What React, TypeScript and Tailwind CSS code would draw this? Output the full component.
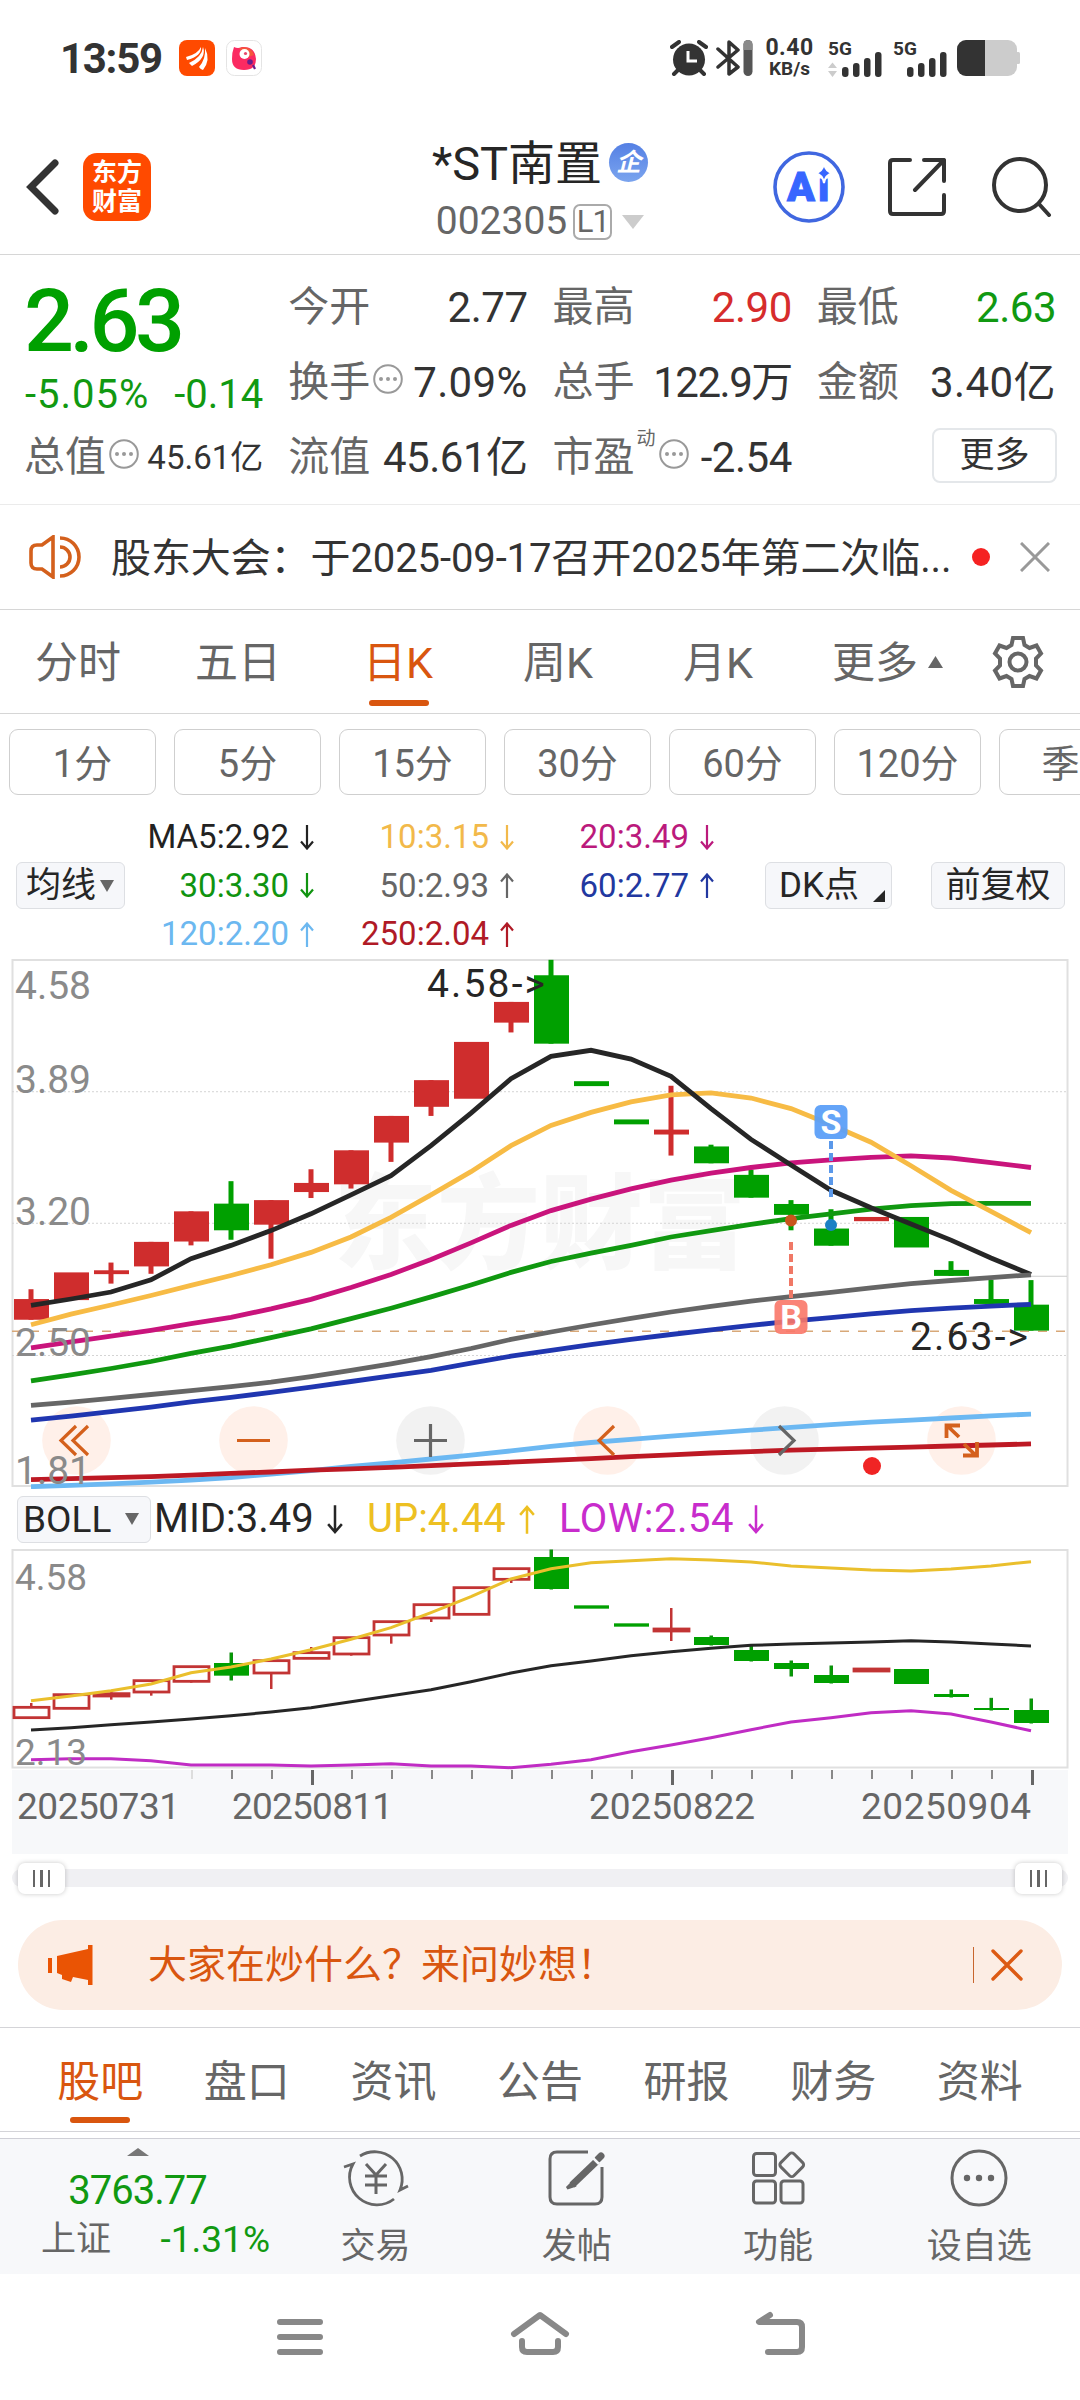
import type { ReactNode } from 'react';

type Trend = 'up' | 'down';

interface Candle {
  body: [number, number];
  wick?: [number, number];
  down?: boolean;
}

// ── Quote data ──────────────────────────────────────────────
const TABS = ['分时', '五日', '日K', '周K', '月K'];
const PERIODS = ['1分', '5分', '15分', '30分', '60分', '120分', '季K'];
const INFO_TABS = ['股吧', '盘口', '资讯', '公告', '研报', '财务', '资料'];

const AVERAGES: { label: string; color: string; trend: Trend }[] = [
  { label: 'MA5:2.92', color: 'text-[#222222]', trend: 'down' },
  { label: '10:3.15', color: 'text-[#f2b94a]', trend: 'down' },
  { label: '20:3.49', color: 'text-[#bb1a7c]', trend: 'down' },
  { label: '30:3.30', color: 'text-[#109410]', trend: 'down' },
  { label: '50:2.93', color: 'text-[#666666]', trend: 'up' },
  { label: '60:2.77', color: 'text-[#2238a0]', trend: 'up' },
  { label: '120:2.20', color: 'text-[#6cb8f0]', trend: 'up' },
  { label: '250:2.04', color: 'text-[#b01a26]', trend: 'up' },
];

// ── Chart data, in plot units from the top of each panel ────
const MAIN_SCALE = 0.3508;
const BOLL_SCALE = 1 / 3;
const x = (i: number) => 31 + i * 40;

const MAIN_CANDLES: Candle[] = [
  { body: [995, 1054], wick: [967, 1054] },
  { body: [919, 998] },
  { body: [913, 924], wick: [891, 951] },
  { body: [832, 902], wick: [832, 923] },
  { body: [745, 831], wick: [745, 842] },
  { body: [723, 799], wick: [659, 826], down: true },
  { body: [713, 783], wick: [713, 880] },
  { body: [664, 690], wick: [625, 707] },
  { body: [571, 668], wick: [571, 680] },
  { body: [473, 549], wick: [473, 604] },
  { body: [371, 447], wick: [371, 473] },
  { body: [262, 424] },
  { body: [148, 207], wick: [148, 235] },
  { body: [72, 267], wick: [28, 267], down: true },
  { body: [374, 388], down: true },
  { body: [483, 497], down: true },
  { body: [512, 526], wick: [387, 586] },
  { body: [560, 608], wick: [555, 608], down: true },
  { body: [641, 706], wick: [626, 706], down: true },
  { body: [724, 755], wick: [713, 799], down: true },
  { body: [794, 843], wick: [739, 843], down: true },
  { body: [761, 773] },
  { body: [761, 848], down: true },
  { body: [912, 929], wick: [887, 929], down: true },
  { body: [995, 1009], wick: [940, 1009], down: true },
  { body: [1011, 1085], wick: [941, 1085], down: true },
];

const MAIN_LINES: { color: string; values: number[] }[] = [
  { color: '#6cb8f2', values: [1530, 1526, 1522, 1517, 1511, 1504, 1494, 1484, 1472, 1462, 1451, 1440, 1428, 1415, 1404, 1395, 1386, 1377, 1369, 1361, 1353, 1346, 1340, 1334, 1328, 1323] },
  { color: '#bd1924', values: [1510, 1507, 1504, 1501, 1497, 1492, 1488, 1483, 1479, 1475, 1470, 1465, 1460, 1455, 1450, 1444, 1439, 1434, 1430, 1426, 1423, 1420, 1417, 1414, 1411, 1408] },
  { color: '#2036b0', values: [1340, 1329, 1316, 1303, 1288, 1275, 1261, 1246, 1230, 1214, 1198, 1178, 1158, 1141, 1125, 1110, 1096, 1083, 1070, 1058, 1048, 1037, 1028, 1021, 1015, 1010] },
  { color: '#109810', values: [1228, 1211, 1193, 1173, 1150, 1129, 1105, 1080, 1051, 1021, 989, 955, 919, 888, 864, 842, 818, 800, 782, 766, 752, 739, 729, 723, 722, 722] },
  { color: '#c9147c', values: [1134, 1117, 1101, 1084, 1065, 1047, 1023, 996, 962, 925, 882, 835, 785, 743, 710, 681, 656, 636, 620, 607, 598, 591, 587, 593, 606, 620] },
  { color: '#f7bb45', values: [1068, 1038, 1012, 985, 956, 928, 897, 862, 818, 762, 698, 632, 558, 500, 463, 433, 413, 407, 422, 452, 498, 548, 615, 685, 745, 806] },
  { color: '#262626', values: [1013, 995, 975, 940, 880, 842, 800, 752, 698, 643, 558, 465, 367, 303, 286, 311, 360, 452, 540, 613, 685, 735, 781, 827, 878, 925] },
  { color: '#666666', values: [1298, 1289, 1278, 1267, 1256, 1245, 1232, 1216, 1198, 1180, 1159, 1136, 1110, 1089, 1069, 1050, 1032, 1016, 1001, 988, 976, 963, 951, 942, 934, 926] },
];

const BOLL_CANDLES: Candle[] = [
  { body: [652, 683], wick: [639, 652] },
  { body: [614, 655] },
  { body: [611, 618], wick: [603, 629] },
  { body: [572, 606], wick: [606, 617] },
  { body: [530, 574], wick: [574, 578] },
  { body: [519, 557], wick: [489, 570], down: true },
  { body: [512, 549], wick: [549, 597] },
  { body: [488, 505], wick: [471, 488] },
  { body: [443, 492], wick: [492, 497] },
  { body: [395, 435], wick: [435, 461] },
  { body: [344, 384], wick: [384, 396] },
  { body: [293, 373] },
  { body: [236, 268], wick: [268, 279] },
  { body: [201, 297], wick: [180, 297], down: true },
  { body: [346, 356], down: true },
  { body: [400, 410], down: true },
  { body: [417, 423], wick: [354, 453] },
  { body: [441, 465], wick: [438, 465], down: true },
  { body: [480, 513], wick: [469, 513], down: true },
  { body: [519, 537], wick: [513, 558], down: true },
  { body: [555, 579], wick: [528, 579], down: true },
  { body: [537, 543] },
  { body: [537, 582], down: true },
  { body: [612, 621], wick: [600, 621], down: true },
  { body: [654, 660], wick: [625, 660], down: true },
  { body: [660, 699], wick: [627, 699], down: true },
];

const BOLL_LINES: { color: string; values: number[] }[] = [
  { color: '#c02cc4', values: [809, 806, 806, 812, 825, 825, 825, 828, 825, 821, 828, 828, 833, 823, 809, 785, 765, 743, 719, 696, 683, 668, 662, 672, 696, 722] },
  { color: '#262626', values: [720, 713, 704, 696, 687, 677, 666, 653, 635, 617, 599, 575, 549, 527, 513, 497, 485, 475, 466, 462, 459, 456, 452, 456, 462, 468] },
  { color: '#eabf2c', values: [632, 618, 602, 582, 548, 531, 507, 479, 448, 413, 368, 320, 267, 236, 218, 212, 206, 210, 216, 228, 234, 240, 243, 237, 228, 215] },
];

const toPoints = (values: number[], scale: number) =>
  values.map((v, i) => `${x(i)},${(v * scale).toFixed(1)}`).join(' ');

// ── Small pieces ────────────────────────────────────────────
function Arrow({ trend, className }: { trend: Trend; className: string }) {
  return (
    <svg viewBox="0 0 14 25" className={className} fill="none" stroke="currentColor" strokeWidth="2.2">
      {trend === 'down' ? <path d="M7 0V23M1 16.5l6 7 6-7" /> : <path d="M7 25V2M1 8.5l6-7 6 7" />}
    </svg>
  );
}

function InfoDots() {
  return (
    <svg viewBox="0 0 30 30" className="mb-[8px] ml-[3px] size-[30px] shrink-0" fill="#999">
      <circle cx="15" cy="15" r="13.8" fill="none" stroke="#999" strokeWidth="2" />
      <circle cx="8" cy="15" r="2" />
      <circle cx="15" cy="15" r="2" />
      <circle cx="22" cy="15" r="2" />
    </svg>
  );
}

function Stat({ label, value, color = 'text-[#333333]', extra }: { label: string; value: string; color?: string; extra?: ReactNode }) {
  return (
    <div className="flex h-[75px] items-center justify-between whitespace-nowrap">
      <span className="-ml-[2px] flex items-center text-[41px] text-[#666666]">
        {label}
        {extra}
      </span>
      <span className={`text-[42px] tracking-[-0.5px] ${color}`}>{value}</span>
    </div>
  );
}

// ── Status bar ──────────────────────────────────────────────
function Signal({ arrows }: { arrows?: boolean }) {
  return (
    <div className="flex h-[36px] w-[54px] flex-col">
      <span className="text-[19px] leading-[17px] font-bold">5G</span>
      <svg viewBox="0 0 54 26" className="-mt-[6px] h-[26px] w-[54px] shrink-0" fill="#333">
        {arrows && <path d="M0 17l4.5-5.500 4.500 5.500zM0 20l4.500 6 4.500-6z" fill="#ccc" />}
        <rect x="14" y="16" width="6.500" height="10" rx="3" />
        <rect x="25" y="12" width="6.500" height="14" rx="3" />
        <rect x="36" y="7" width="6.500" height="19" rx="3" />
        <rect x="47" y="1" width="6.500" height="25" rx="3" />
      </svg>
    </div>
  );
}

function StatusBar() {
  return (
    <div className="flex h-[116px] items-center pr-[59px] pl-[60px] text-[#333333]">
      <span className="w-[119px] text-[42px] font-bold tracking-[-1.3px]">13:59</span>
      <svg viewBox="0 0 36 36" className="size-[36px]">
        <rect width="36" height="36" rx="8" fill="#ff4a00" />
        <path d="M7 17Q19 14 22 7q1 9-14 13zM10 23Q23 17 24 7q4 11-11 19zM20 27Q27 19 26 8q6 12-2 22-2 0-4-3z" fill="#fff" />
      </svg>
      <svg viewBox="0 0 36 36" className="ml-[11px] size-[36px]">
        <rect x=".5" y=".5" width="35" height="35" rx="8" fill="#fff" stroke="#e4e4e4" />
        <path d="M8 7q4 2 8 0 13-1 14 12 0 11-12 11Q6 30 6 19 6 12 8 7z" fill="#fb2a62" />
        <path d="M13 8q12-3 15 7l-8 3z" fill="#f4573c" />
        <circle cx="18.500" cy="14" r="5" fill="#fff" />
        <circle cx="19.500" cy="13.500" r="1.600" fill="#e8486a" />
        <circle cx="24" cy="22" r="2.800" fill="#6a1d8c" />
        <path d="M27 25l2 4" stroke="#6a1d8c" strokeWidth="2.200" />
      </svg>
      <div className="ml-auto flex items-center">
        <svg viewBox="0 0 38 36" className="h-[36px] w-[38px]">
          <circle cx="19" cy="19.500" r="16" fill="#333" />
          <path d="M2 7l7-5M36 7l-7-5M4 34l6-6M34 34l-6-6" stroke="#333" strokeWidth="4" strokeLinecap="round" />
          <path d="M18 11v10h9" fill="none" stroke="#fff" strokeWidth="3" />
        </svg>
        <svg viewBox="0 0 37 36" className="ml-[8px] h-[36px] w-[37px]" fill="none" stroke="#333" strokeWidth="3.500">
          <path d="M2 9l20 18-9 7V2l9 8L2 27" strokeLinejoin="round" strokeLinecap="round" />
          <rect x="27.500" width="9" height="36" rx="4.500" fill="#555" stroke="none" />
          <path d="M27.500 10V4.500a4.500 4.500 0 019 0V10z" fill="#8a8a8a" stroke="none" />
        </svg>
        <div className="ml-[13px] flex w-[47px] flex-col items-center font-bold">
          <span className="text-[23px] leading-[22px] tracking-[0.5px]">0.40</span>
          <span className="text-[19px] leading-[20px]">KB/s</span>
        </div>
        <div className="ml-[15px]">
          <Signal arrows />
        </div>
        <div className="ml-[11px]">
          <Signal />
        </div>
        <svg viewBox="0 0 64 36" className="ml-[10px] h-[36px] w-[64px]">
          <rect width="60" height="36" rx="9" fill="#ccc" />
          <rect x="59" y="12" width="4" height="12" rx="1.500" fill="#ccc" />
          <path d="M9 0h19v36H9a9 9 0 01-9-9V9a9 9 0 019-9z" fill="#333" />
        </svg>
      </div>
    </div>
  );
}

// ── Title bar ───────────────────────────────────────────────
function Header() {
  return (
    <div className="grid h-[139px] grid-cols-[1fr_auto_1fr] items-center border-b border-[#d6d6d6] pt-[4px]">
      <div className="flex items-center pl-[26px]">
        <svg viewBox="0 0 34 58" className="h-[58px] w-[34px]" fill="none" stroke="#333" strokeWidth="7" strokeLinecap="round">
          <path d="M29 5L5 29l24 24" />
        </svg>
        <div className="ml-[23px] flex size-[68px] flex-col items-center justify-center rounded-[14px] bg-[#ff4a00] text-[25px] leading-[29px] font-bold text-white">
          <span>东方</span>
          <span>财富</span>
        </div>
      </div>
      <div className="flex flex-col items-center pt-[11px]">
        <div className="flex h-[58px] items-center text-[47px] text-[#262626]">
          *ST南置
          <span className="mb-[4px] ml-[7px] flex size-[39px] items-center justify-center rounded-full bg-linear-to-b from-[#5580e4] to-[#7ba4ee] text-[25px] leading-none font-bold text-white italic">
            企
          </span>
        </div>
        <div className="flex h-[56px] items-center text-[39px] text-[#666666]">
          002305
          <span className="ml-[6px] flex h-[36px] w-[39px] items-center justify-center rounded-[7px] border-2 border-[#aaaaaa] text-[31px] leading-none tracking-[-1px]">
            L1
          </span>
          <svg viewBox="0 0 22 14" className="ml-[10px] h-[14px] w-[22px]" fill="#ccc">
            <path d="M0 0h22L11 14z" />
          </svg>
        </div>
      </div>
      <div className="flex items-center justify-end pr-[28px]">
        <svg viewBox="0 0 72 72" className="size-[72px]">
          <circle cx="36" cy="36" r="34" fill="none" stroke="#4067e0" strokeWidth="3.600" />
          <text x="14" y="50" fontSize="41" fontWeight="900" fill="#3766ff" stroke="#3766ff" strokeWidth="1">
            A
            <tspan dx="3">i</tspan>
          </text>
          <path d="M51 12q1.500 9 9 10-7.500 1.500-9 10-1.500-8.500-9-10 7.500-1 9-10z" fill="#3766ff" stroke="#fff" strokeWidth="2" />
        </svg>
        <svg viewBox="0 0 58 58" className="ml-[43px] size-[58px]" fill="none" stroke="#333" strokeWidth="4" strokeLinecap="round" strokeLinejoin="round">
          <path d="M22 2H5Q2 2 2 5v48q0 3 3 3h48q3 0 3-3V37" />
          <path d="M36 2h20v21M56 2L27 32" />
        </svg>
        <svg viewBox="0 0 60 60" className="ml-[46px] size-[60px]" fill="none" stroke="#333" strokeWidth="4" strokeLinecap="round">
          <circle cx="28" cy="28" r="26" />
          <path d="M47 47l10 11" />
        </svg>
      </div>
    </div>
  );
}

function QuotePanel() {
  return (
    <div className="grid h-[250px] grid-cols-4 gap-x-[27px] border-b border-[#ebebeb] pt-[15px] pr-[24px] pl-[26px]">
      <div className="flex flex-col">
        <div className="-ml-[2px] flex h-[100px] items-center pt-[2px] text-[88px] leading-none font-medium tracking-[-4.5px] text-[#00a000]">2.63</div>
        <div className="flex h-[50px] items-center justify-between text-[40px] text-[#119911]">
          <span className="-ml-[1px] tracking-[1px]">-5.05%</span>
          <span>-0.14</span>
        </div>
        <div className="flex h-[75px] items-center justify-between whitespace-nowrap">
          <span className="-ml-[2px] flex items-center text-[41px] text-[#666666]">
            总值
            <InfoDots />
          </span>
          <span className="text-[33px] text-[#333333]">45.61亿</span>
        </div>
      </div>
      <div>
        <Stat label="今开" value="2.77" />
        <Stat label="换手" value="7.09%" color="text-[#333333] tracking-[0.3px]" extra={<InfoDots />} />
        <Stat label="流值" value="45.61亿" />
      </div>
      <div>
        <Stat label="最高" value="2.90" color="text-[#d62c2c]" />
        <Stat label="总手" value="122.9万" color="text-[#333333] tracking-[-1.5px]" />
        <Stat
          label="市盈"
          value="-2.54"
          extra={
            <>
              <span className="mb-[38px] ml-[2px] text-[19px] leading-none">动</span>
              <InfoDots />
            </>
          }
        />
      </div>
      <div>
        <Stat label="最低" value="2.63" color="text-[#119911]" />
        <Stat label="金额" value="3.40亿" color="text-[#333333] tracking-[0.4px]" />
        <div className="flex h-[71px] items-center justify-end">
          <button className="-mr-[1px] h-[55px] w-[125px] rounded-[8px] border-2 border-[#e4e7ea] text-[35px] leading-none text-[#333333]">更多</button>
        </div>
      </div>
    </div>
  );
}

function Notice() {
  return (
    <div className="flex h-[105px] items-center border-b border-[#d6d6d6] pr-[30px] pl-[29px]">
      <svg viewBox="0 0 52 44" className="h-[44px] w-[52px]" fill="none" stroke="#d4601c" strokeWidth="3.600">
        <path d="M24 2v40l-11-8H8q-6 0-6-6V16q0-6 6-6h5z" />
        <path d="M31 3a19 19 0 010 38M31 12a10 10 0 010 20" />
      </svg>
      <span className="ml-[30px] pt-[3px] text-[40px] tracking-[-0.1px] whitespace-nowrap text-[#333333]">股东大会：于2025-09-17召开2025年第二次临...</span>
      <span className="ml-auto size-[18px] rounded-full bg-[#f52222]" />
      <svg viewBox="0 0 30 30" className="ml-[30px] size-[30px]" stroke="#999" strokeWidth="3">
        <path d="M1 1l28 28M29 1L1 29" />
      </svg>
    </div>
  );
}

function ChartTabs() {
  return (
    <div className="flex h-[104px] items-center border-b border-[#d6d6d6] text-[43px] text-[#666666]">
      {TABS.map((tab) => (
        <div key={tab} className="relative flex h-full w-[160px] items-center justify-center pt-[4px] pr-[4px]">
          <span className={tab === '日K' ? 'text-[#d9560f]' : ''}>{tab}</span>
          {tab === '日K' && <span className="absolute bottom-[7px] left-[49px] h-[6px] w-[60px] rounded-full bg-[#d9560f]" />}
        </div>
      ))}
      <div className="ml-[32px] flex items-center pt-[4px]">
        更多
        <svg viewBox="0 0 15 12" className="mb-[4px] ml-[10px] h-[12px] w-[15px]" fill="#666">
          <path d="M7.500 0L15 12H0z" />
        </svg>
      </div>
      <svg viewBox="0 0 52 54" className="ml-[49px] h-[54px] w-[52px]" fill="none" stroke="#666" strokeWidth="4">
        <path d="M21 3h10l1.500 7 5 3 7-2.500 4.500 8-5 5v7l5 5-4.500 8-7-2.500-5 3L31 51H21l-1.500-7-5-3-7 2.500-4.500-8 5-5v-7l-5-5 4.500-8 7 2.500 5-3z" />
        <circle cx="26" cy="27" r="8.500" />
      </svg>
    </div>
  );
}

function Periods() {
  return (
    <div className="flex h-[97px] gap-[18px] overflow-hidden pt-[15px] pl-[9px]">
      {PERIODS.map((p) => (
        <button key={p} className="h-[66px] w-[147px] shrink-0 rounded-[9px] border border-[#cfcfcf] pt-[4px] text-[38px] leading-none text-[#666666]">
          {p}
        </button>
      ))}
    </div>
  );
}

function Averages() {
  return (
    <div className="flex h-[148px] items-center pt-[1px]">
      <button className="ml-[16px] flex h-[47px] w-[109px] items-center rounded-[6px] border border-[#dddfe3] bg-[#f6f7fa] pl-[9px] text-[35px] leading-none text-[#262626]">
        均线
        <svg viewBox="0 0 14 12" className="ml-[4px] h-[12px] w-[14px]" fill="#666">
          <path d="M0 0h14L7 12z" />
        </svg>
      </button>
      <div className="-ml-[11px] grid w-[600px] grid-cols-3">
        {AVERAGES.map(({ label, color, trend }) => (
          <div key={label} className={`flex h-[48.5px] items-center justify-end text-[33px] whitespace-nowrap ${color}`}>
            {label}
            <Arrow trend={trend} className="ml-[11px] h-[25px] w-[14px]" />
          </div>
        ))}
      </div>
      <button className="relative ml-[51px] h-[47px] w-[127px] rounded-[6px] border border-[#dddfe3] bg-[#f6f7fa] pl-[13px] text-left text-[35px] leading-none text-[#262626]">
        DK点
        <svg viewBox="0 0 12 12" className="absolute right-[6px] bottom-[6px] size-[12px]" fill="#262626">
          <path d="M12 0v12H0z" />
        </svg>
      </button>
      <button className="ml-[39px] h-[47px] w-[134px] rounded-[6px] border border-[#dddfe3] bg-[#f6f7fa] text-[35px] leading-none whitespace-nowrap text-[#262626]">前复权</button>
    </div>
  );
}

// ── Candlestick chart ───────────────────────────────────────
function MainChart() {
  const y = (v: number) => v * MAIN_SCALE;
  return (
    <svg viewBox="0 9 1080 530" className="block h-[530px] w-[1080px]">
      <rect x="12.500" y="10" width="1055" height="526" fill="none" stroke="#e0e0e0" strokeWidth="2" />
      <text x="334" y="311" fontSize="103" fontWeight="900" fill="#f7f7f7">
        东方财富
      </text>
      {[404, 779, 1156].map((v) => (
        <line key={v} x1="12" x2="1067" y1={y(v)} y2={y(v)} stroke="#d4d4d4" strokeDasharray="2 2" />
      ))}
      <line x1="12" x2="1067" y1={y(1087)} y2={y(1087)} stroke="#d8a878" strokeWidth="1.500" strokeDasharray="9 9" />
      <line x1="1031" x2="1067" y1={y(930)} y2={y(930)} stroke="#cccccc" />

      {[76.5, 253.5, 430.5, 607.5, 784.5, 961.5].map((cx, i) => (
        <circle key={cx} cx={cx} cy="490.500" r="34.300" fill={i === 2 || i === 4 ? '#f2f2f2' : '#fff0e9'} />
      ))}

      {MAIN_CANDLES.map((c, i) => (
        <g key={i} fill={c.down ? '#00a000' : '#cf2d2d'}>
          {c.wick && <rect x={x(i) - 2.5} y={y(c.wick[0])} width="5" height={y(c.wick[1] - c.wick[0])} />}
          <rect x={x(i) - 17} y={y(c.body[0])} width="35" height={y(c.body[1] - c.body[0])} />
        </g>
      ))}
      {MAIN_LINES.map((l) => (
        <polyline key={l.color} points={toPoints(l.values, MAIN_SCALE)} fill="none" stroke={l.color} strokeWidth="4.800" />
      ))}

      {/* Price labels */}
      <g fontSize="39" fill="#8a8a8a">
        <text x="15" y="49">4.58</text>
        <text x="15" y="143">3.89</text>
        <text x="15" y="275">3.20</text>
        <text x="15" y="406">2.50</text>
        <text x="15" y="534">1.81</text>
      </g>
      <g fontSize="39" fill="#262626">
        <text x="427" y="47" textLength="118">4.58-&gt;</text>
        <text x="910" y="400" textLength="118">2.63-&gt;</text>
      </g>

      {/* Buy and sell marks */}
      <g strokeWidth="4" strokeDasharray="8 4">
        <line x1="831" x2="831" y1="191" y2="247" stroke="#5a98ea" />
        <line x1="791" x2="791" y1="292" y2="348" stroke="#f07866" />
      </g>
      <circle cx="831" cy="275" r="6" fill="#1a80c4" />
      <circle cx="791" cy="270.500" r="6" fill="#c8561c" />
      <rect x="814.500" y="155" width="33" height="34" rx="6" fill="#5c9ff8" fillOpacity=".95" />
      <rect x="774.500" y="350" width="33" height="34" rx="6" fill="#fa7768" fillOpacity=".9" />
      <g fontSize="34" fontWeight="700" fill="#fff" textAnchor="middle">
        <text x="831" y="184">S</text>
        <text x="791" y="379">B</text>
      </g>

      {/* Zoom and pan controls */}
      <g fill="none" stroke="#d4601c" strokeWidth="3.200">
        <path d="M76 476L61 490.500 76 505M88 476L73 490.500 88 505" />
        <path d="M237 490.500h33" />
        <path d="M614 476l-15 14.500L614 505" />
        <path d="M959 487L947 475.500M960 475.500H946.500V488M964 494l12 11.500M963 505.500H977V492" strokeWidth="3.800" />
        <path d="M414 490.500h33M430.500 474v33M779 476l15 14.500L779 505" stroke="#666" />
      </g>
      <circle cx="872" cy="516" r="9" fill="#f02424" />
    </svg>
  );
}

function BollHeader() {
  return (
    <div className="flex h-[60px] items-center text-[40px] leading-none">
      <button className="ml-[17px] flex h-[47px] w-[134px] items-center rounded-[6px] border border-[#dddfe3] bg-[#f6f7fa] pl-[5px] text-[37px] leading-none text-[#262626]">
        BOLL
        <svg viewBox="0 0 14 12" className="ml-[14px] h-[12px] w-[14px]" fill="#666">
          <path d="M0 0h14L7 12z" />
        </svg>
      </button>
      <span className="ml-[3px] flex w-[213px] items-center text-[#262626]">
        MID:3.49
        <Arrow trend="down" className="ml-[13px] h-[29px] w-[16px]" />
      </span>
      <span className="flex w-[192px] items-center text-[#edc022]">
        UP:4.44
        <Arrow trend="up" className="ml-[13px] h-[29px] w-[16px]" />
      </span>
      <span className="flex items-center tracking-[0.5px] text-[#c82ccc]">
        LOW:2.54
        <Arrow trend="down" className="ml-[14px] h-[29px] w-[16px]" />
      </span>
    </div>
  );
}

function BollChart() {
  const y = (v: number) => v * BOLL_SCALE;
  return (
    <svg viewBox="0 59 1080 305" className="block h-[305px] w-[1080px]">
      <rect x="12.500" y="60" width="1055" height="217.500" fill="none" stroke="#e0e0e0" strokeWidth="2" />
      <rect x="12" y="280" width="1056" height="84" fill="#f7f8fa" />

      {BOLL_CANDLES.map((c, i) => (
        <g key={i} fill={c.down ? '#00a000' : 'none'} stroke={c.down ? 'none' : '#c23434'} strokeWidth="2.800">
          {c.wick && <rect x={x(i) - 1} y={y(c.wick[0])} width="2.500" height={y(c.wick[1] - c.wick[0])} fill={c.down ? '#00a000' : '#c23434'} stroke={c.down ? '#108c10' : 'none'} strokeWidth="1" />}
          <rect x={x(i) - 17} y={y(c.body[0])} width="35" height={y(c.body[1] - c.body[0])} />
        </g>
      ))}
      {BOLL_LINES.map((l) => (
        <polyline key={l.color} points={toPoints(l.values, BOLL_SCALE)} fill="none" stroke={l.color} strokeWidth="3" />
      ))}
      <g fontSize="37" fill="#8a8a8a">
        <text x="15" y="100">4.58</text>
        <text x="15" y="275">2.13</text>
      </g>

      {/* Date axis */}
      {BOLL_LINES[0].values.map((_, i) => {
        if (i < 4) return null;
        const major = i % 9 === 7;
        return <rect key={i} x={x(i)} y="280" width={major ? 3 : 2} height={major ? 15 : 9} fill={i === 4 ? '#dddddd' : major ? '#666666' : '#888888'} />;
      })}
      <g fontSize="37" fill="#666666">
        <text x="17" y="329" textLength="163">20250731</text>
        <text x="232" y="329" textLength="161">20250811</text>
        <text x="589" y="329" textLength="166">20250822</text>
        <text x="861" y="329" textLength="170">20250904</text>
      </g>
    </svg>
  );
}

function Handle() {
  return (
    <div className="z-10 flex h-[31px] w-[47px] items-center justify-center gap-[5px] rounded-[7px] bg-white shadow-[0_0_5px_rgba(0,0,0,0.22)]">
      <span className="h-[17px] w-[2.5px] bg-[#666666]" />
      <span className="h-[17px] w-[2.5px] bg-[#666666]" />
      <span className="h-[17px] w-[2.5px] bg-[#666666]" />
    </div>
  );
}

function RangeSlider() {
  return (
    <div className="flex h-[66px] items-start px-[12px] pt-[15px]">
      <div className="flex h-[18px] w-full items-center justify-between rounded-full bg-[#f0f0f3] px-[6px]">
        <Handle />
        <Handle />
      </div>
    </div>
  );
}

function AskBanner() {
  return (
    <div className="mx-[18px] flex h-[90px] items-center rounded-full bg-[#fcede4] pr-[39px] pl-[29px] text-[#d9560f]">
      <svg viewBox="0 0 46 40" className="h-[40px] w-[46px]" fill="#ea5404">
        <path d="M1 13h4v15H1zM10 11L41 4V0h4.500v40H41v-5l-15-3-2 5-9-3v-4l-5-2z" />
      </svg>
      <span className="ml-[55px] text-[39px] leading-none">大家在炒什么？来问妙想！</span>
      <span className="ml-auto h-[36px] w-px bg-[#c8662e]" />
      <svg viewBox="0 0 32 32" className="ml-[17px] size-[32px]" stroke="#dc5a14" strokeWidth="3.400" strokeLinecap="round">
        <path d="M2 2l28 28M30 2L2 30" />
      </svg>
    </div>
  );
}

function InfoTabs() {
  return (
    <div className="mt-[17px] flex h-[105px] items-center border-y border-[#d4d4d8] pr-[27px] pl-[27px] text-[43px] text-[#666666]">
      {INFO_TABS.map((tab, i) => (
        <div key={tab} className="relative flex h-full flex-1 items-center justify-center pt-[5px]">
          <span className={i === 0 ? 'text-[#d9560f]' : ''}>{tab}</span>
          {i === 0 && <span className="absolute bottom-[8px] h-[6px] w-[60px] rounded-full bg-[#d9560f]" />}
        </div>
      ))}
    </div>
  );
}

// ── Bottom bar ──────────────────────────────────────────────
function Action({ label, children }: { label: string; children: ReactNode }) {
  return (
    <div className="flex flex-1 flex-col items-center pt-[10px]">
      <svg viewBox="0 0 66 58" className="h-[58px] w-[66px]" fill="none" stroke="#666" strokeWidth="3">
        {children}
      </svg>
      <span className="mt-[17px] text-[35px] leading-[46px]">{label}</span>
    </div>
  );
}

function BottomBar() {
  return (
    <div className="mt-[6px] flex h-[136px] border-t border-[#cfcfd6] bg-[#f7f8fa] text-[#666666]">
      <div className="flex w-[275px] flex-col items-center">
        <svg viewBox="0 0 22 8" className="mt-[9px] h-[8px] w-[22px]" fill="#777">
          <path d="M11 0l11 8H0z" />
        </svg>
        <span className="mt-[11px] text-[40px] leading-[48px] tracking-[-1px] text-[#119911]">3763.77</span>
        <div className="flex w-full items-center justify-between pt-[2px] pr-[5px] pl-[41px] leading-[46px]">
          <span className="text-[35px]">上证</span>
          <span className="text-[37px] text-[#119911]">-1.31%</span>
        </div>
      </div>
      <Action label="交易">
        <path d="M17 7a27.500 27.500 0 0140 34l8-4M51 50A27.500 27.500 0 0110 15l-9 3" strokeWidth="2.800" />
        <path d="M23 15l10 11 10-11M33 26v19M22 27h22M22 36h22" />
      </Action>
      <Action label="发帖">
        <path d="M44 3H13q-7 0-7 7v38q0 7 7 7h38q7 0 7-7V18" />
        <path d="M53 12L28 36" strokeWidth="7" />
        <path d="M31 31l-8 8 9-3" fill="#666" />
        <path d="M54 10l3-3" strokeWidth="7" strokeLinecap="round" />
        <path d="M48 8l7 7" stroke="#f7f8fa" strokeWidth="2.500" />
      </Action>
      <Action label="功能">
        <rect x="8.500" y="4.500" width="22" height="22" rx="3" />
        <rect x="8.500" y="32" width="22" height="22" rx="3" />
        <rect x="36" y="32" width="22" height="22" rx="3" />
        <rect x="37.500" y="6.500" width="18.500" height="18.500" rx="3" transform="rotate(45 46.750 15.750)" />
      </Action>
      <Action label="设自选">
        <circle cx="33" cy="29" r="27" />
        <g fill="#666" stroke="none">
          <circle cx="21" cy="29" r="3.200" />
          <circle cx="33" cy="29" r="3.200" />
          <circle cx="45" cy="29" r="3.200" />
        </g>
      </Action>
    </div>
  );
}

function SystemNav() {
  return (
    <div className="flex h-[126px] items-start justify-between px-[276px] pt-[37px]">
      {[
        'M4 11h40M4 26h40M4 41h40',
        'M-2 23L24 4l26 19M6 30v6q0 5 5 5h26q5 0 5-5v-6',
        'M14 4L3 11h38q5 0 5 5v20q0 5-5 5H12',
      ].map((d) => (
        <svg key={d} viewBox="0 0 48 48" className="size-[48px] overflow-visible" fill="none" stroke="#888" strokeWidth="6" strokeLinecap="round" strokeLinejoin="round">
          <path d={d} />
        </svg>
      ))}
    </div>
  );
}

export default function App() {
  return (
    <div className="h-[2400px] w-[1080px] overflow-hidden bg-white font-[Roboto,'Noto_Sans_CJK_SC',sans-serif]">
      <StatusBar />
      <Header />
      <QuotePanel />
      <Notice />
      <ChartTabs />
      <Periods />
      <Averages />
      <MainChart />
      <BollHeader />
      <BollChart />
      <RangeSlider />
      <AskBanner />
      <InfoTabs />
      <BottomBar />
      <SystemNav />
    </div>
  );
}
